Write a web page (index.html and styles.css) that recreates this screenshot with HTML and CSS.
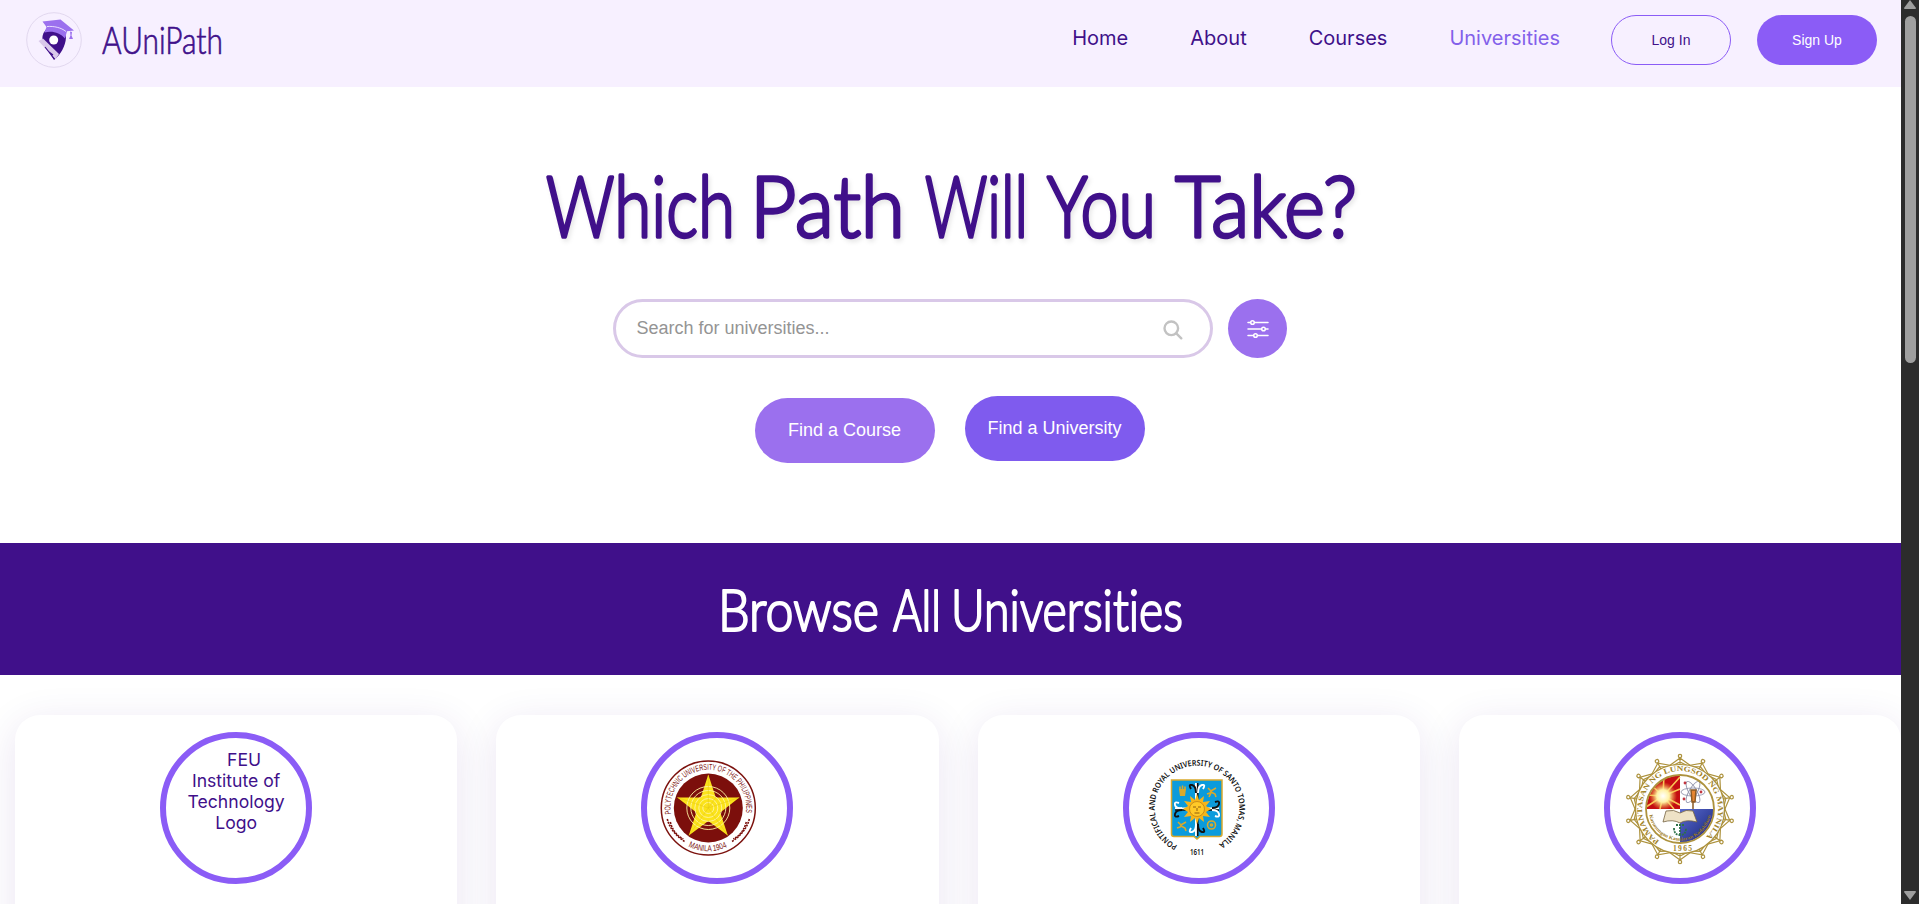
FILE: index.html
```html
<!DOCTYPE html>
<html lang="en">
<head>
<meta charset="utf-8">
<title>AUniPath</title>
<link rel="stylesheet" href="styles.css">
</head>
<body>
<div class="page">
  <header class="navbar">
    <a class="brand">
      <svg class="brand-mark" viewBox="0 0 56 56">
        <circle cx="28" cy="28" r="27.300" fill="#f7f0ff" stroke="#e2d8ef"/>
        <path d="M17.500 21c-2.500 6-.5 10 2.500 15l8 12c7-6 11.500-14 12-22.500l-1-5-19-3z" fill="#40108a"/>
        <path d="M12.500 29l4.500-2.500 16 15.500-3.500 5.500z" fill="#d9c8ea"/>
        <path d="M19 35l9.500 12M23 40l4 3" stroke="#40108a" stroke-width="1.200"/>
        <circle cx="27.700" cy="28" r="4.500" fill="#fff"/>
        <path d="M16.500 9.500l18-2L48 18.500l-7 .8-2 7.200c-5-6-13-8-20.500-6l2-5.500z" fill="#9b70ee"/>
        <path d="M21 14.500c7-.5 14 1 19 5" fill="none" stroke="#f1e8ff" stroke-width=".9"/>
        <path d="M44 19.500l2 .5-.5 3.500 1.500 3.500h-4l1.500-3.500z" fill="#9b70ee"/>
      </svg>
      <svg class="brand-name" viewBox="0 0 124 44"><text x="1" y="36" textLength="121" lengthAdjust="spacingAndGlyphs">AUniPath</text></svg>
    </a>
    <nav class="links">
      <a>Home</a><a>About</a><a>Courses</a><a class="active">Universities</a>
    </nav>
    <div class="auth">
      <button class="pill outline">Log In</button>
      <button class="pill solid">Sign Up</button>
    </div>
  </header>

  <section class="hero">
    <svg class="hero-title" viewBox="0 0 830 100">
      <text x="11" y="75" textLength="189" lengthAdjust="spacingAndGlyphs">Which</text>
      <text x="215" y="75" textLength="155" lengthAdjust="spacingAndGlyphs">Path</text>
      <text x="390" y="75" textLength="103" lengthAdjust="spacingAndGlyphs">Will</text>
      <text x="512" y="75" textLength="109" lengthAdjust="spacingAndGlyphs">You</text>
      <text x="640" y="75" textLength="182" lengthAdjust="spacingAndGlyphs">Take?</text>
    </svg>
    <div class="search-row">
      <div class="search">
        <span>Search for universities...</span>
        <svg class="search-icon" viewBox="0 0 20 20"><circle cx="8.300" cy="8.300" r="6.800"/><path d="M13.300 13.300l5 5"/></svg>
      </div>
      <button class="filter">
        <svg viewBox="0 0 22 20"><path d="M1 3.500h2.500M7.500 3.500h13.500M1 10h13.500M18.500 10H21M1 16.500h5.500M10.500 16.500H21"/><circle cx="5.500" cy="3.500" r="1.800"/><circle cx="16.500" cy="10" r="1.800"/><circle cx="8.500" cy="16.500" r="1.800"/></svg>
      </button>
    </div>
    <div class="actions">
      <button class="action course">Find a Course</button>
      <button class="action university">Find a University</button>
    </div>
  </section>

  <section class="band">
    <svg class="band-title" viewBox="0 0 480 70">
      <text x="7" y="52" textLength="161" lengthAdjust="spacingAndGlyphs">Browse</text>
      <text x="182" y="52" textLength="48" lengthAdjust="spacingAndGlyphs">All</text>
      <text x="240" y="52" textLength="232" lengthAdjust="spacingAndGlyphs">Universities</text>
    </svg>
  </section>

  <main class="cards">
    <article class="card"><div class="seal alt"><span class="alt-text">FEU Institute of Technology Logo</span></div></article>

    <article class="card"><div class="seal">
      <svg viewBox="-70 -70 140 140">
        <defs>
          <path id="pup-top" d="M-37.200 7A37.900 37.900 0 1 1 37.200 7"/>
          <path id="pup-bottom" d="M-25 35.300A43.300 43.300 0 0 0 25 35.300"/>
        </defs>
        <g transform="translate(-8.700 0)">
          <circle r="47" fill="#fff" stroke="#7c120e" stroke-width="1.500"/>
          <circle r="34.500" fill="#7c0f0c"/>
          <path d="M0-33.500L7.500-10.500H31L12 4.500 19.500 27.500 0 13-19.500 27.500-12 4.500-31-10.500H-7.500z" fill="#fbe31a"/>
          <g fill="none" stroke="#fff3a0" stroke-width=".9"><circle r="21.500"/><circle r="17.500"/><circle r="13.500"/><circle r="9.500"/><circle r="5.500"/></g>
          <path d="M0-33V0L7.500-10.500M0 0L31-10.500M0 0L19.500 27.500M0 0L-19.500 27.500M0 0L-31-10.500" fill="none" stroke="#e3c516" stroke-width=".5"/>
          <g fill="none" stroke="#7c120e" stroke-width="1.600" stroke-dasharray="2 1"><path d="M-41 11Q-38 24-23 34M-38 14Q-35 26-25 31M41 11Q38 24 23 34M38 14Q35 26 25 31"/></g>
          <text class="pup-text"><textPath href="#pup-top" startOffset="1" textLength="130" lengthAdjust="spacingAndGlyphs">POLYTECHNIC UNIVERSITY OF THE PHILIPPINES</textPath></text>
          <text class="pup-text"><textPath href="#pup-bottom" startOffset="6" textLength="40" lengthAdjust="spacingAndGlyphs">MANILA 1904</textPath></text>
        </g>
      </svg></div></article>

    <article class="card"><div class="seal">
      <svg viewBox="-70 -70 140 140">
        <defs><path id="ust-ring" d="M-19.500 37.500A42.300 42.300 0 1 1 19.500 37.500"/></defs>
        <g transform="translate(-2 0)">
          <path d="M-25.500-28h50.500v54q0 2.500-2.500 2.500H3L0 31l-3-2.500h-20q-2.500 0-2.500-2.500z" fill="#0b9bdc" stroke="#d9a92c" stroke-width="1.500"/>
          <path d="M-1-25V28M-22 .5H22" stroke="#fff" stroke-width="2"/>
          <path d="M.7-25V28M-22 2H22" stroke="#111" stroke-width="1.600"/>
          <g fill="none" stroke-width="1.900"><path d="M1-15Q1-22 5-23T6-19M-15 0Q-21 1-22-3T-18-5M15 2Q21 2 22 6T18 8" stroke="#fff"/><path d="M-1-15Q-1-22-5-23T-6-19M-15 2Q-21 2-22 6T-18 8M15 0Q21 0 22-4T18-6M1 16Q1 23 5 24T6 20" stroke="#111"/><path d="M-1 16Q-1 23-5 24T-6 20" stroke="#fff"/></g>
          <path d="M0-14l2 6 5-4-1 6 7-1-4 5 5 3-5 3 4 5-7-1 1 6-5-4-2 6-2-6-5 4 1-6-7 1 4-5-5-3 5-3-4-5 7 1-1-6 5 4z" fill="#f5b51c"/>
          <circle cy="1" r="7.500" fill="#ffc928" stroke="#b87913" stroke-width=".7"/>
          <path d="M-4-1h3M1-1h3M0 0v3M-2.500 5h5" stroke="#84500c" stroke-width=".9"/>
          <path d="M-18-19h7l-1 7h-5z" fill="#d9a92c"/>
          <g fill="none" stroke="#d9a92c" stroke-width="1.600"><path d="M-17-21.500v3M-14.500-22.500v4M-12-21.500v3M11-20l3 3 5-3M15-18l-2 3-3 1M14-16l4 2 1 3M14-15l-2 4M-19 14l3 3 5-3M-15 16l-2 3-3 1M-16 18l4 2 1 3"/><circle cx="14.500" cy="17" r="4"/><circle cx="14.500" cy="17" r="1"/></g>
          <text class="ust-text"><textPath href="#ust-ring" textLength="222" lengthAdjust="spacingAndGlyphs">PONTIFICAL AND ROYAL UNIVERSITY OF SANTO TOMAS, MANILA</textPath></text>
          <text class="ust-text" x="-7" y="46.500" textLength="14" lengthAdjust="spacingAndGlyphs">1611</text>
        </g>
      </svg></div></article>

    <article class="card"><div class="seal">
      <svg viewBox="-70 -70 140 140">
        <defs>
          <path id="plm-ring" d="M-20.500 32A38 38 0 1 1 21.500 31.500"/>
          <path id="plm-motto" d="M-31 4A31.200 31.200 0 0 0 31 4"/>
          <clipPath id="plm-disc"><circle r="33.500"/></clipPath>
          <linearGradient id="plm-blue" x1="0" y1="0" x2="1" y2="1"><stop offset="0" stop-color="#596bd0"/><stop offset="1" stop-color="#141f72"/></linearGradient>
          <radialGradient id="plm-sun"><stop offset="0" stop-color="#fff"/><stop offset=".45" stop-color="#fff2a5"/><stop offset="1" stop-color="#f4b43a" stop-opacity="0"/></radialGradient>
          <g id="plm-point" fill="none" stroke="#ad923d" stroke-width="1.200"><path d="M-11-43L0-51 11-43M-7-43.500L0-47 7-43.500M0-44V-51"/><circle cy="-53" r="1.700"/></g>
        </defs>
        <g transform="translate(0 1)">
          <g><use href="#plm-point"/><use href="#plm-point" transform="rotate(25.710)"/><use href="#plm-point" transform="rotate(51.430)"/><use href="#plm-point" transform="rotate(77.140)"/><use href="#plm-point" transform="rotate(102.860)"/><use href="#plm-point" transform="rotate(128.570)"/><use href="#plm-point" transform="rotate(154.290)"/><use href="#plm-point" transform="rotate(180)"/><use href="#plm-point" transform="rotate(205.710)"/><use href="#plm-point" transform="rotate(231.430)"/><use href="#plm-point" transform="rotate(257.140)"/><use href="#plm-point" transform="rotate(282.860)"/><use href="#plm-point" transform="rotate(308.570)"/><use href="#plm-point" transform="rotate(334.290)"/></g>
          <circle r="44.500" fill="#fff" stroke="#ad923d" stroke-width="1.200"/>
          <g clip-path="url(#plm-disc)">
            <path d="M-35-35H35V35H-35z" fill="#fff"/>
            <path d="M-35-35H0V0H-35z" fill="#c40d12"/>
            <path d="M0 0H35V35H0z" fill="url(#plm-blue)"/>
            <path d="M-17-13L-33-28M-17-13L-16-34M-17-13L0-32M-17-13L0-20M-17-13L0-4M-17-13L-6 0M-17-13L-20 0M-17-13L-34-2M-17-13L-35-14" stroke="#f9c554" stroke-width="1.600"/>
            <circle cx="-17" cy="-13" r="14" fill="url(#plm-sun)"/>
          </g>
          <g fill="none" stroke="#9295ac" stroke-width=".9"><ellipse cx="13" cy="-17" rx="12" ry="4"/><ellipse cx="13" cy="-17" rx="12" ry="4" transform="rotate(60 13 -17)"/><ellipse cx="13" cy="-17" rx="12" ry="4" transform="rotate(120 13 -17)"/></g>
          <path d="M13-8V0M11-19h5l-1 12h-3z" stroke="#8b5a25" stroke-width="1.500" fill="#e78632"/>
          <g fill="#c23640"><circle cx="5" cy="-26" r="1.400"/><circle cx="21" cy="-17" r="1.400"/><circle cx="4" cy="-10" r="1.400"/></g>
          <path d="M0 15V25M-6 19q0 7 6 7t6-7M-4 16H4" fill="none" stroke="#2c7147" stroke-width="1.800" stroke-dasharray="2 1"/>
          <path d="M-14 2Q-6 0 0 4 6 0 13 2L17 13Q6 10 0 14-7 10-17 13z" fill="#eee2c6" stroke="#756343" stroke-width=".8"/>
          <circle r="34" fill="none" stroke="#ad923d" stroke-width="1.800"/>
          <text class="plm-motto"><textPath href="#plm-motto" startOffset="2" textLength="86" lengthAdjust="spacingAndGlyphs">Karunungan Kaunlaran Kadakilaan</textPath></text>
          <text class="plm-text"><textPath href="#plm-ring" textLength="188" lengthAdjust="spacingAndGlyphs">PAMANTASAN NG LUNGSOD NG MAYNILA</textPath></text>
          <text class="plm-text" x="-7" y="42" textLength="19" lengthAdjust="spacing">1965</text>
        </g>
      </svg></div></article>
  </main>
</div>
<aside class="scrollbar">
  <svg viewBox="0 0 18 10"><path d="M9 0l6 8q0 1-1 1H4q-1 0-1-1z"/></svg>
  <div class="thumb"></div>
  <svg class="down" viewBox="0 0 18 10"><path d="M9 10L3 2q0-1 1-1h10q1 0 1 1z"/></svg>
</aside>
</body>
</html>
```

FILE: styles.css
```css
* { box-sizing: border-box; }
body { margin: 0; height: 904px; overflow: hidden; display: flex; background: #fff; font-family: Inter, sans-serif; color: #40108a; }
.page { width: 1901px; height: 904px; overflow: hidden; }
button { border: 0; padding: 0; font-family: "Liberation Sans", Arial, sans-serif; }
svg { display: block; overflow: visible; }

.navbar { height: 87px; background: #f7f0ff; display: flex; align-items: flex-start; padding: 0 24px 0 26px; }
.brand { display: flex; padding-top: 12px; gap: 19px; }
.brand-mark { width: 56px; height: 56px; }
.brand-name { width: 124px; height: 44px; margin-top: 6px; }
.brand-name text, .hero-title text, .band-title text { font-family: Lato, sans-serif; font-weight: 300; font-variant-ligatures: none; stroke-linejoin: round; }
.brand-name text { font-size: 37px; fill: #40108a; stroke: #40108a; stroke-width: .7px; }
.links { display: flex; gap: 62px; margin-left: auto; padding-top: 26px; font-size: 20px; line-height: 24px; }
.links .active { color: #8360ea; }
.auth { display: flex; gap: 26px; padding-top: 15px; margin-left: 51px; }
.pill { width: 120px; height: 50px; border-radius: 25px; font-size: 14px; }
.outline { border: 1px solid #8b5cf6; background: transparent; color: #40108a; }
.solid { background: #8b5cf6; color: #fff; }

.hero { height: 456px; display: flex; flex-direction: column; align-items: center; padding: 75px 2px 0 0; }
.hero-title { width: 830px; height: 100px; filter: drop-shadow(2px 3px 2px rgba(0,0,0,.09)); }
.hero-title text { font-size: 85px; fill: #40108a; stroke: #40108a; stroke-width: 3.4px; }
.search-row { display: flex; gap: 15px; margin-top: 37px; }
.search { width: 600px; height: 59px; border: 3px solid #d9c8e8; border-radius: 30px; display: flex; align-items: center; justify-content: space-between; padding: 0 27px 0 21px; font: 18px "Liberation Sans", Arial, sans-serif; color: #949494; }
.search-icon { width: 20px; height: 20px; margin-top: 2px; fill: none; stroke: #c2c2c2; stroke-width: 2.4; stroke-linecap: round; }
.filter { width: 59px; height: 59px; border-radius: 50%; background: #9b70ee; display: grid; place-items: center; }
.filter svg { width: 22px; height: 20px; margin-left: 2px; fill: none; stroke: #fff; stroke-width: 1.5; stroke-linecap: round; }
.actions { display: flex; gap: 30px; margin-top: 38px; }
.action { width: 180px; height: 65px; border-radius: 33px; color: #fff; font-size: 18px; }
.course { background: #9b70ee; margin-top: 2px; }
.university { background: #7f5bee; }

.band { height: 132px; background: #40108a; display: flex; justify-content: center; padding-top: 36px; }
.band-title { width: 480px; height: 70px; }
.band-title text { font-size: 57px; fill: #fff; stroke: #fff; stroke-width: 2.2px; }

.cards { display: grid; grid-template-columns: repeat(4, 442.3px); gap: 39px; padding: 40px 0 0 15px; }
.card { height: 420px; border-radius: 25px; background: #fff; box-shadow: 0 8px 40px rgba(64,16,138,.11); display: flex; flex-direction: column; align-items: center; padding-top: 17px; }
.seal { width: 152px; height: 152px; border: 6px solid #8b5cf6; border-radius: 50%; }
.seal svg { width: 140px; height: 140px; }
.alt { padding: 11px 20px 0; text-align: center; font-size: 17.6px; line-height: 21px; }
.alt-text { display: block; text-indent: 16px; }
.pup-text { font: 8.5px "Liberation Sans", sans-serif; fill: #7c120e; }
.ust-text { font: 600 8px "Noto Sans", sans-serif; fill: #111; }
.plm-text { font: bold 7.5px "Liberation Serif", serif; fill: #a18328; }
.plm-motto { font: bold 5px "Liberation Serif", serif; fill: #9a7821; }

.scrollbar { width: 18px; height: 904px; background: #2c2c2c; display: flex; flex-direction: column; align-items: center; }
.scrollbar svg { width: 18px; height: 10px; fill: #9f9f9f; }
.thumb { width: 11px; height: 347px; margin-top: 6px; border-radius: 6px; background: #9f9f9f; }
.scrollbar .down { margin-top: auto; margin-bottom: 4px; }
```
